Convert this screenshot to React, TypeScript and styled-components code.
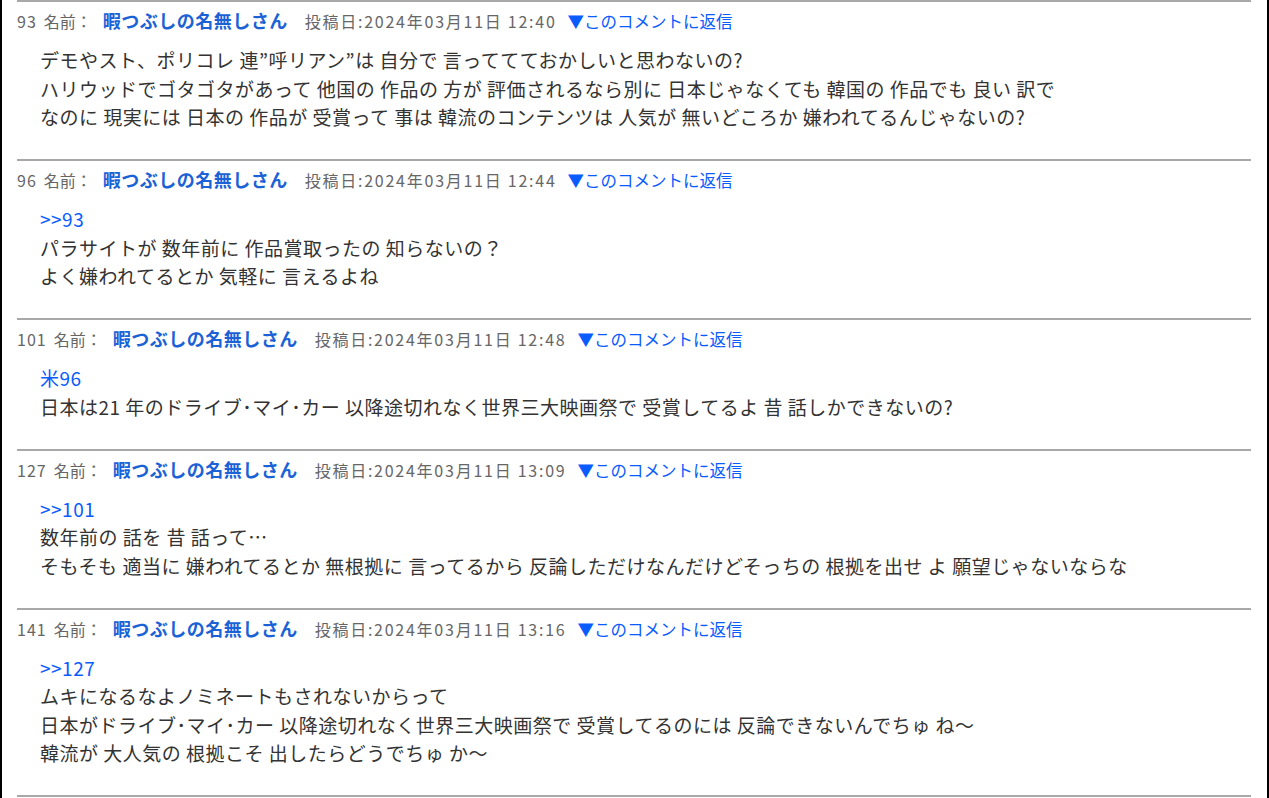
import styled, { createGlobalStyle } from "styled-components";

const GlobalStyle = createGlobalStyle`
  html, body {
    margin: 0;
    padding: 0;
    background: #fff;
  }
  body {
    font-family: "Noto Sans CJK JP", "Noto Sans", sans-serif;
    color: #333;
  }
`;

const Page = styled.div`
  min-height: 100vh;
  border-left: 2px solid #000;
  border-right: 2px solid #000;
  padding: 0 16px 0 15px;
  background: #fff;
`;

const Post = styled.article`
  border-top: 2px solid #a8a8a8;
`;

const Divider = styled.hr`
  margin: 0;
  border: 0;
  border-top: 2px solid #a8a8a8;
`;

const Header = styled.div`
  display: flex;
  align-items: baseline;
  height: 28px;
  line-height: 28px;
  margin-top: 4px;
  font-size: 16px;
  color: #666;
  white-space: nowrap;
`;

const Num = styled.span`
  margin-right: 7px;
  letter-spacing: 1px;
`;

const Name = styled.span`
  margin-left: 11px;
  font-size: 18px;
  font-weight: bold;
  letter-spacing: 0.5px;
  color: #1a62d6;
`;

const Posted = styled.span`
  margin-left: 17px;
  letter-spacing: 1.75px;
`;

const Reply = styled.a`
  margin-left: 11px;
  font-size: 16.5px;
  color: #0a5cff;
  text-decoration: none;
  cursor: pointer;
`;

const Body = styled.div`
  margin-top: 12px;
  padding: 0 0 27.5px 23px;
  font-size: 19px;
  letter-spacing: 0.5px;
  line-height: 28.5px;
  color: #333;
`;

const Line = styled.div`
  white-space: nowrap;
`;

const Anchor = styled.a`
  display: block;
  color: #0a5cff;
  text-decoration: none;
`;

interface IPost {
  num: number;
  time: string;
  anchor?: string;
  lines: string[];
}

const posts: IPost[] = [
  {
    num: 93,
    time: "12:40",
    lines: [
      "デモやスト、ポリコレ 連”呼リアン”は 自分で 言っててておかしいと思わないの?",
      "ハリウッドでゴタゴタがあって 他国の 作品の 方が 評価されるなら別に 日本じゃなくても 韓国の 作品でも 良い 訳で",
      "なのに 現実には 日本の 作品が 受賞って 事は 韓流のコンテンツは 人気が 無いどころか 嫌われてるんじゃないの?",
    ],
  },
  {
    num: 96,
    time: "12:44",
    anchor: ">>93",
    lines: ["パラサイトが 数年前に 作品賞取ったの 知らないの？", "よく嫌われてるとか 気軽に 言えるよね"],
  },
  {
    num: 101,
    time: "12:48",
    anchor: "米96",
    lines: ["日本は21 年のドライブ･マイ･カー 以降途切れなく世界三大映画祭で 受賞してるよ 昔 話しかできないの?"],
  },
  {
    num: 127,
    time: "13:09",
    anchor: ">>101",
    lines: [
      "数年前の 話を 昔 話って…",
      "そもそも 適当に 嫌われてるとか 無根拠に 言ってるから 反論しただけなんだけどそっちの 根拠を出せ よ 願望じゃないならな",
    ],
  },
  {
    num: 141,
    time: "13:16",
    anchor: ">>127",
    lines: [
      "ムキになるなよノミネートもされないからって",
      "日本がドライブ･マイ･カー 以降途切れなく世界三大映画祭で 受賞してるのには 反論できないんでちゅ ね〜",
      "韓流が 大人気の 根拠こそ 出したらどうでちゅ か〜",
    ],
  },
];

const App = () => {
  return (
    <Page>
      <GlobalStyle />
      {posts.map(post => (
        <Post key={post.num}>
          <Header>
            <Num>{post.num}</Num>
            <span>名前：</span>
            <Name>暇つぶしの名無しさん</Name>
            <Posted>投稿日:2024年03月11日 {post.time}</Posted>
            <Reply>▼このコメントに返信</Reply>
          </Header>
          <Body>
            {post.anchor && <Anchor>{post.anchor}</Anchor>}
            {post.lines.map((line, i) => <Line key={i}>{line}</Line>)}
          </Body>
        </Post>
      ))}
      <Divider />
    </Page>
  );
};

export default App;
